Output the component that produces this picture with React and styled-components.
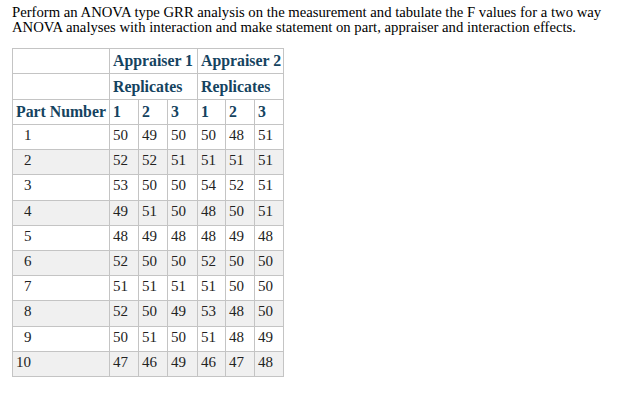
import React from 'react';
import styled, { createGlobalStyle } from 'styled-components';

const GlobalStyle = createGlobalStyle`
  body {
    margin: 0;
    background: #fff;
  }
`;

const Page = styled.div`
  padding: 5px 12px;
  font-family: "Liberation Serif", "Times New Roman", serif;
  color: #000;
`;

const Question = styled.p`
  margin: 0;
  font-size: 14.7px;
  line-height: 15px;
  width: 600px;
`;

const Table = styled.table`
  margin-top: 13px;
  border-collapse: collapse;
  table-layout: fixed;
  width: 272px;
`;

const HeadCell = styled.th`
  border: 1px solid #c4c4c4;
  padding: 0 3px;
  text-align: left;
  font-family: "Liberation Serif", "Times New Roman", serif;
  font-weight: bold;
  font-size: 15.8px;
  color: #15435f;
  white-space: nowrap;
  height: ${(p) => p.$h || 24}px;
`;

const Row = styled.tr`
  background: ${(p) => (p.$shade ? '#f0f0f0' : '#fff')};
`;

const Cell = styled.td`
  border: 1px solid #c4c4c4;
  padding: 0 0 3px ${(p) => p.$indent || 3}px;
  height: 21.2px;
  font-family: "Liberation Serif", Georgia, serif;
  font-size: 15px;
  color: #222;
  white-space: nowrap;
`;

const widths = [97, 29, 29, 30, 28, 29, 29];

const data = [
  [50, 49, 50, 50, 48, 51],
  [52, 52, 51, 51, 51, 51],
  [53, 50, 50, 54, 52, 51],
  [49, 51, 50, 48, 50, 51],
  [48, 49, 48, 48, 49, 48],
  [52, 50, 50, 52, 50, 50],
  [51, 51, 51, 51, 50, 50],
  [52, 50, 49, 53, 48, 50],
  [50, 51, 50, 51, 48, 49],
  [47, 46, 49, 46, 47, 48],
];

export default function App() {
  return (
    <Page>
      <GlobalStyle />
      <Question>
        Perform an ANOVA type GRR analysis on the measurement and tabulate the F values for a two way
        ANOVA analyses with interaction and make statement on part, appraiser and interaction effects.
      </Question>
      <Table>
        <colgroup>
          {widths.map((w, i) => (
            <col key={i} style={{ width: w }} />
          ))}
        </colgroup>
        <thead>
          <tr>
            <HeadCell $h={24} />
            <HeadCell $h={24} colSpan={3}>Appraiser 1</HeadCell>
            <HeadCell $h={24} colSpan={3}>Appraiser 2</HeadCell>
          </tr>
          <tr>
            <HeadCell $h={25} />
            <HeadCell $h={25} colSpan={3}>Replicates</HeadCell>
            <HeadCell $h={25} colSpan={3}>Replicates</HeadCell>
          </tr>
          <tr>
            <HeadCell $h={24}>Part Number</HeadCell>
            {[1, 2, 3, 1, 2, 3].map((n, i) => (
              <HeadCell $h={24} key={i}>{n}</HeadCell>
            ))}
          </tr>
        </thead>
        <tbody>
          {data.map((row, r) => (
            <Row key={r} $shade={r % 2 === 1}>
              <Cell $indent={r === 9 ? 3 : 11}>{r + 1}</Cell>
              {row.map((v, i) => (
                <Cell key={i}>{v}</Cell>
              ))}
            </Row>
          ))}
        </tbody>
      </Table>
    </Page>
  );
}
